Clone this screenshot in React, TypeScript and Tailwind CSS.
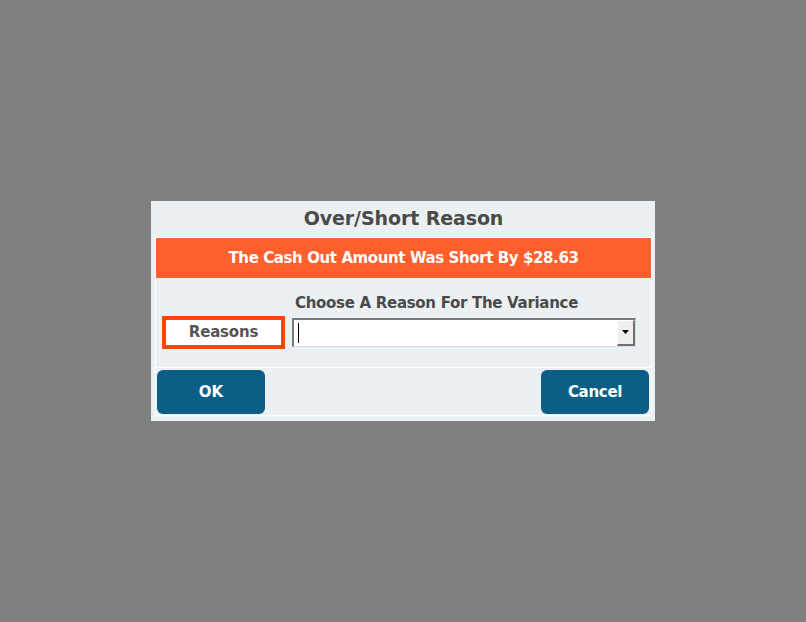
import React from 'react';

const font = { fontFamily: '"DejaVu Sans", Verdana, sans-serif' };

export default function App() {
  return (
    <div className="w-[806px] h-[622px] bg-[#808080] flex items-center justify-center" style={font}>
      {/* Dialog */}
      <div className="w-[504px] h-[220px] bg-[#ebf0f3] flex flex-col pl-[4px] pr-[3px]">
        <div className="h-[36px] flex items-center justify-center pb-[1px] text-[19px] font-bold text-[#4a4a4a] tracking-[-0.1px]">
          Over/Short Reason
        </div>

        <div className="border border-white flex flex-col h-[179px]">
          {/* Banner */}
          <div className="h-[40px] bg-[#ff5f2d] flex items-center justify-center text-white font-bold text-[15px] tracking-[-0.4px]">
            The Cash Out Amount Was Short By $28.63
          </div>

          {/* Reason picker */}
          <div className="h-[90px] border-b border-white pt-[15px] pl-[6px]">
            <div className="grid grid-cols-[123px_344px] gap-x-[7px]">
              <div />
              <div className="pl-[3px] h-[23px] leading-[20px] text-[15px] font-bold text-[#4a4a4a] tracking-[-0.3px]">
                Choose A Reason For The Variance
              </div>
              <div className="h-[33px] border-[4px] border-[#ff4500] bg-white flex items-center justify-center text-[15px] font-bold text-[#555555] tracking-[-0.2px]">
                Reasons
              </div>
              <div className="self-center h-[29px] flex border-t-2 border-l-2 border-[#7a7a7a] border-b border-r border-b-[#dcdcdc] border-r-[#dcdcdc] bg-white">
                <div className="flex-1 flex items-center pl-[4px]">
                  <div className="w-px h-[20px] bg-black" />
                </div>
                <div className="w-[18px] bg-[#efefef] border-l border-t border-white border-r-2 border-b-2 border-r-[#707070] border-b-[#707070] flex items-center justify-center">
                  <svg width="8" height="5" viewBox="0 0 8 5">
                    <path d="M0 0h7L3.5 4z" fill="#000" />
                  </svg>
                </div>
              </div>
            </div>
          </div>

          {/* Buttons */}
          <div className="flex-1 flex justify-between items-start pt-[2px] pl-[1px] pr-[2px]">
            <button className="w-[108px] h-[44px] rounded-[6px] bg-[#0b5f86] text-white font-bold text-[15px]">
              OK
            </button>
            <button className="w-[108px] h-[44px] rounded-[6px] bg-[#0b5f86] text-white font-bold text-[15px] tracking-[-0.3px]">
              Cancel
            </button>
          </div>
        </div>
      </div>
    </div>
  );
}
